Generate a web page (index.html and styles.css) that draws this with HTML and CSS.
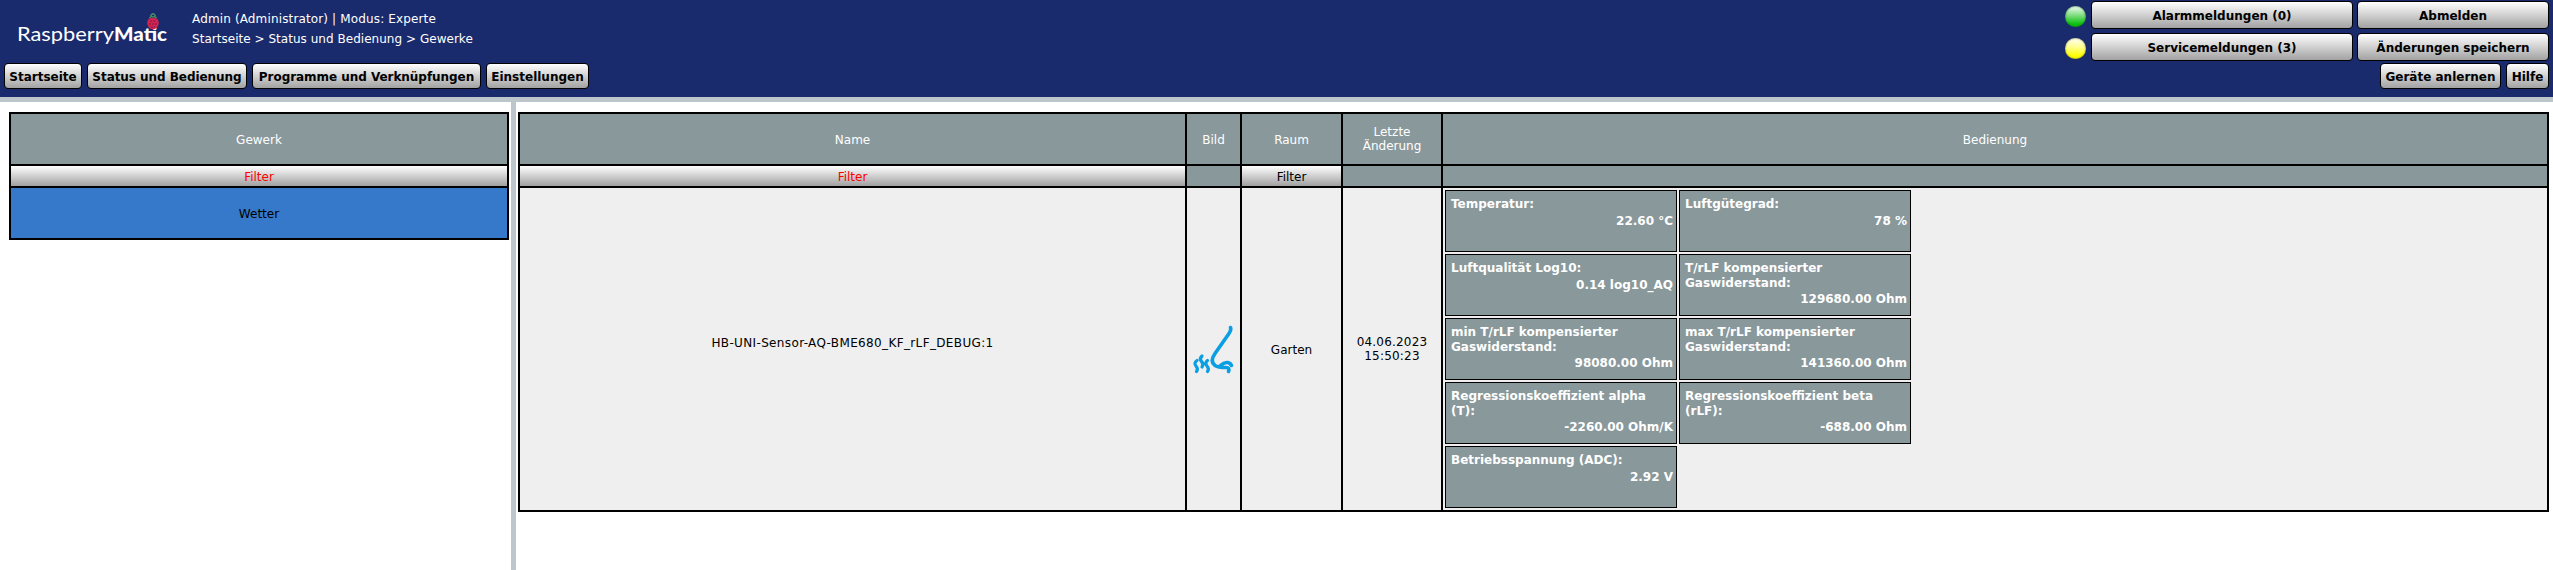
FILE: index.html
```html
<!DOCTYPE html>
<html lang="de">
<head>
<meta charset="utf-8">
<title>RaspberryMatic</title>
<link rel="stylesheet" href="styles.css">
</head>
<body>
<header class="header">
  <div class="header-left">
    <div class="brand">
      <svg class="logo" width="192" height="60" viewBox="0 0 192 60">
        <text class="logo-thin" x="17" y="41" textLength="97" lengthAdjust="spacingAndGlyphs">Raspberry</text>
        <text class="logo-bold" x="114" y="41" textLength="53" lengthAdjust="spacingAndGlyphs">Matic</text>
        <path d="M149.500 18Q151 16 153 17Q155 16 156.500 18M150.500 16Q153 11.500 155.500 16" fill="none" stroke="#4d9a61" stroke-width="1.300"/>
        <path d="M148.500 19Q153 16.500 157.500 19Q160.500 23.500 157 27.500Q153 31.500 149 27.500Q145.500 23.500 148.500 19Z" fill="#d02450"/>
        <path d="M150 21H156M149 24H157M151 27H155" stroke="#7d1a48" stroke-width="1" stroke-dasharray="2 1"/>
      </svg>
      <div class="crumbs">
        <div class="user">Admin (Administrator) | Modus: Experte</div>
        <div class="path">Startseite &gt; Status und Bedienung &gt; Gewerke</div>
      </div>
    </div>
    <nav class="menu">
      <a class="btn w-start">Startseite</a>
      <a class="btn w-status">Status und Bedienung</a>
      <a class="btn w-prog">Programme und Verknüpfungen</a>
      <a class="btn w-settings">Einstellungen</a>
    </nav>
  </div>
  <div class="header-right">
    <div class="actions">
      <span class="led led-green"></span><a class="btn tall">Alarmmeldungen (0)</a><a class="btn tall">Abmelden</a>
      <span class="led led-yellow"></span><a class="btn tall">Servicemeldungen (3)</a><a class="btn tall">Änderungen speichern</a>
    </div>
    <div class="menu menu-right">
      <a class="btn w-learn">Geräte anlernen</a>
      <a class="btn w-help">Hilfe</a>
    </div>
  </div>
</header>
<main class="main">
  <aside class="side">
    <div class="grid side-grid">
      <div class="head">Gewerk</div>
      <div class="filter active">Filter</div>
      <div class="selected">Wetter</div>
    </div>
  </aside>
  <section class="content">
    <div class="grid content-grid">
      <div class="head">Name</div>
      <div class="head">Bild</div>
      <div class="head">Raum</div>
      <div class="head two-line">Letzte<br>Änderung</div>
      <div class="head">Bedienung</div>
      <div class="filter active">Filter</div>
      <div class="head"></div>
      <div class="filter">Filter</div>
      <div class="head"></div>
      <div class="head"></div>
      <div class="cell name">HB-UNI-Sensor-AQ-BME680_KF_rLF_DEBUG:1</div>
      <div class="cell">
        <svg class="nose" width="50" height="50" viewBox="0 0 50 50">
          <g fill="none" stroke="#0a9fe3" stroke-linecap="round" stroke-linejoin="round">
            <path stroke-width="3.600" d="M41.500 2.500Q42.500 5 40 8.500L26 28.500Q20.500 36.500 26 40.500Q29 42.500 37 42.500Q41 42.500 39.500 46.500M31.500 40.500Q35 37 38.500 37.500Q41.500 38 42.500 40.500"/>
            <path stroke-width="3.200" d="M8 35.500Q4.500 38 7 41Q9.500 44 7.500 46.500M13 31Q10 34 12.500 36.500Q15 39 13 42M18.500 35.500Q15.500 38 18 41Q20.500 44 18.500 46.500"/>
          </g>
        </svg>
      </div>
      <div class="cell room">Garten</div>
      <div class="cell date two-line">04.06.2023<br>15:50:23</div>
      <div class="cell controls">
        <div class="tile"><div>Temperatur:</div><div class="value">22.60 °C</div></div>
        <div class="tile"><div>Luftgütegrad:</div><div class="value">78 %</div></div>
        <div class="tile"><div>Luftqualität Log10:</div><div class="value">0.14 log10_AQ</div></div>
        <div class="tile"><div>T/rLF kompensierter<br>Gaswiderstand:</div><div class="value second">129680.00 Ohm</div></div>
        <div class="tile"><div>min T/rLF kompensierter<br>Gaswiderstand:</div><div class="value second">98080.00 Ohm</div></div>
        <div class="tile"><div>max T/rLF kompensierter<br>Gaswiderstand:</div><div class="value second">141360.00 Ohm</div></div>
        <div class="tile"><div>Regressionskoeffizient alpha<br>(T):</div><div class="value second">-2260.00 Ohm/K</div></div>
        <div class="tile"><div>Regressionskoeffizient beta<br>(rLF):</div><div class="value second">-688.00 Ohm</div></div>
        <div class="tile"><div>Betriebsspannung (ADC):</div><div class="value">2.92 V</div></div>
      </div>
    </div>
  </section>
</main>
</body>
</html>
```
FILE: styles.css
```css
* { box-sizing: border-box; }
body {
  margin: 0;
  height: 570px;
  overflow: hidden;
  background: #fff;
  font: 12px/14px Verdana, "DejaVu Sans", sans-serif;
  color: #000;
}
.header {
  display: flex;
  justify-content: space-between;
  height: 102px;
  background: #1a2b6d;
  border-bottom: 5px solid #bdc6ca;
}
.brand { display: flex; height: 63px; }
.logo { display: block; }
.logo-thin, .logo-bold { font-family: Lato, sans-serif; font-size: 19px; fill: #fff; }
.logo-thin { font-weight: 400; }
.logo-bold { font-weight: 900; }
.crumbs { padding-top: 9px; line-height: 20px; color: #fff; }
.user { letter-spacing: 0.14px; }
.path { letter-spacing: 0.03px; }
.menu { display: flex; gap: 5px; padding-left: 4px; }
.menu-right { justify-content: flex-end; padding: 0; margin-top: 2px; }
.btn {
  display: flex;
  align-items: center;
  justify-content: center;
  height: 26px;
  padding-top: 2px;
  border: 1px solid #000;
  border-radius: 4px;
  background: linear-gradient(#fff, #a2a2a2);
  font-weight: bold;
  white-space: nowrap;
}
.tall { height: 28px; }
.w-start { width: 78px; }
.w-status { width: 160px; letter-spacing: -0.05px; }
.w-prog { width: 229px; letter-spacing: -0.05px; }
.w-settings { width: 103px; }
.w-learn { width: 121px; }
.w-help { width: 43px; }
.header-right { padding: 1px 4px 0 0; }
.actions {
  display: grid;
  grid-template-columns: 22px 262px 192px;
  column-gap: 4px;
  row-gap: 4px;
  align-items: center;
}
.led { width: 21px; height: 21px; margin-top: 2px; border-radius: 50%; }
.led-green { background: linear-gradient(#e9f9e9 5%, #7edc7e 45%, #0cc010 85%); box-shadow: inset 0 0 2px #0b5a20; }
.led-yellow { background: linear-gradient(#fffff0 5%, #ffff8a 45%, #ffff00 85%); box-shadow: inset 0 0 2px #77772a; }
.main { display: flex; height: 468px; }
.side { width: 516px; padding: 10px 0 0 9px; border-right: 5px solid #bdc6ca; }
.content { padding: 10px 0 0 2px; }
.grid { display: grid; gap: 2px; padding: 2px; background: #000; text-align: center; }
.side-grid { width: 500px; grid-template-rows: 50px 20px 50px; }
.content-grid {
  width: 2031px;
  grid-template-columns: 665px 53px 99px 98px 1104px;
  grid-template-rows: 50px 20px 322px;
}
.grid > div { display: flex; align-items: center; justify-content: center; padding-top: 2px; }
.head { background: #89989b; color: #fff; }
.filter { background: linear-gradient(#fff, #a0a0a0); }
.active { color: #f00; }
.selected { background: #3678c9; }
.cell { background: #efefef; }
.grid > .name { padding: 0 0 12px; letter-spacing: 0.36px; }
.grid > .two-line { padding: 0; }
.grid > .date { padding-bottom: 1px; letter-spacing: 0.2px; }
.grid > .controls {
  display: grid;
  grid-template-columns: 232px 232px;
  grid-auto-rows: 62px;
  gap: 2px;
  align-content: start;
  align-items: stretch;
  justify-content: start;
  padding: 2px;
}
.tile {
  border: 1px solid #000;
  background: #89989b;
  color: #fff;
  font-weight: bold;
  line-height: 15px;
  text-align: left;
  padding: 6px 3px 0 5px;
}
.value { text-align: right; margin-top: 2px; }
.second { margin-top: 1px; }
```
